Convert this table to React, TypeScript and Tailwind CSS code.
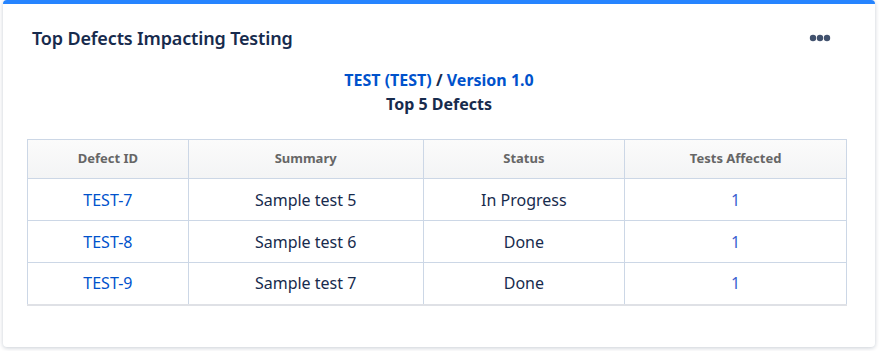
const rows = [
  { id: 'TEST-7', summary: 'Sample test 5', status: 'In Progress', tests: 1 },
  { id: 'TEST-8', summary: 'Sample test 6', status: 'Done', tests: 1 },
  { id: 'TEST-9', summary: 'Sample test 7', status: 'Done', tests: 1 },
]

// three filled dots, like the menu trigger in the reference
function Dots() {
  return (
    <svg width="22" height="8" viewBox="0 0 22 8" className="text-[#42526e]">
      <circle cx="4" cy="4" r="3.2" fill="currentColor" />
      <circle cx="11" cy="4" r="3.2" fill="currentColor" />
      <circle cx="18" cy="4" r="3.2" fill="currentColor" />
    </svg>
  )
}

export default function App() {
  return (
    <div className="w-[879px] h-[351px] bg-white pl-[3px] pr-[4px] pb-[4px] font-['Noto_Sans','Open_Sans',sans-serif] text-[#172b4d]">
      <div className="h-full rounded-[4px] border-t-[4px] border-[#2684ff] bg-white shadow-[0_1px_4px_rgba(9,30,66,0.22)] flex flex-col">
        {/* header */}
        <div className="flex items-center justify-between pl-[29px] pr-[44px] pt-[16px] h-[51px]">
          <h2 className="text-[18px] font-semibold leading-none tracking-[-0.15px]">Top Defects Impacting Testing</h2>
          <Dots />
        </div>

        {/* subtitle */}
        <div className="flex flex-col items-center mt-[13px] text-[16px] font-bold leading-[24px]">
          <p>
            <span className="text-[#0052cc]">TEST (TEST)</span>
            <span> / </span>
            <span className="text-[#0052cc]">Version 1.0</span>
          </p>
          <p>Top 5 Defects</p>
        </div>

        {/* table */}
        <div className="px-[24px] mt-[23px]">
          <table className="w-[820px] border-collapse border-b-[2px] border-b-[#dfe1e6] text-center">
            <colgroup>
              <col className="w-[161px]" />
              <col className="w-[235px]" />
              <col className="w-[202px]" />
              <col className="w-[222px]" />
            </colgroup>
            <thead>
              <tr className="h-[39px] bg-gradient-to-b from-[#fbfbfb] to-[#f3f4f5] text-[13px] font-bold text-[#666]">
                {['Defect ID', 'Summary', 'Status', 'Tests Affected'].map((h) => (
                  <th key={h} className="border border-[#ccd7e6] font-bold">{h}</th>
                ))}
              </tr>
            </thead>
            <tbody className="text-[16px]">
              {rows.map((r) => (
                <tr key={r.id} className="h-[42px]">
                  <td className="border border-[#ccd7e6] text-[#0052cc]">{r.id}</td>
                  <td className="border border-[#ccd7e6]">{r.summary}</td>
                  <td className="border border-[#ccd7e6]">{r.status}</td>
                  <td className="border border-[#ccd7e6] text-[#3b5fd0]">{r.tests}</td>
                </tr>
              ))}
            </tbody>
          </table>
        </div>
      </div>
    </div>
  )
}
